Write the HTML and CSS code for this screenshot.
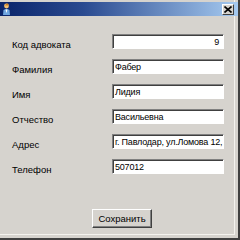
FILE: index.html
```html
<!DOCTYPE html>
<html lang="ru">
<head>
    <meta charset="UTF-8">
    <title>Адвокат</title>
    <link rel="stylesheet" href="styles.css">
</head>
<body>
    <div class="window">
        <div class="title-bar">
            <svg class="app-icon" width="9" height="12" viewBox="0 0 9 12">
                <circle cx="4.5" cy="3" r="2.4" fill="#f4c070"/>
                <path d="M4 1 L6 0.5 L6.5 2.5 L3 2.5 Z" fill="#d08020"/>
                <path d="M1 12 L1.5 7 Q4.5 5 7.5 7 L8 12 Z" fill="#6fa6e0"/>
                <path d="M3.5 6.5 L4.5 10 L5.5 6.5 Z" fill="#ffffff"/>
            </svg>
            <div class="close-btn">
                <svg width="8" height="7" viewBox="0 0 8 7">
                    <path d="M0.5 0.5 L7.5 6.5 M7.5 0.5 L0.5 6.5" stroke="#000" stroke-width="1.6"/>
                </svg>
            </div>
        </div>

        <div class="form">
            <label class="label">Код адвоката</label>
            <div class="field num">9</div>

            <label class="label">Фамилия</label>
            <div class="field">Фабер</div>

            <label class="label">Имя</label>
            <div class="field">Лидия</div>

            <label class="label">Отчество</label>
            <div class="field">Васильевна</div>

            <label class="label">Адрес</label>
            <div class="field">г. Павлодар, ул.Ломова 12,</div>

            <label class="label">Телефон</label>
            <div class="field">507012</div>
        </div>

        <div class="actions">
            <button class="btn">Сохранить</button>
        </div>
    </div>
</body>
</html>
```

FILE: styles.css
```css
body {
    margin: 0;
    padding: 0;
    background-color: #d6d3ce;
    font-family: "Liberation Sans", Arial, sans-serif;
    font-size: 9.5px;
    color: #000;
}

.window {
    width: 238px;
    height: 238px;
    border-right: 2px solid #404040;
    border-bottom: 2px solid #404040;
    box-shadow: inset -3px -3px 0 #d6d3ce, inset -4px -4px 0 #f4f2ee;
    overflow: hidden;
}

.title-bar {
    margin-top: 2px;
    height: 14px;
    background: linear-gradient(to right, #0a246a 0%, #2a4a90 35%, #a6caf0 100%);
    display: flex;
    align-items: center;
    justify-content: space-between;
    padding: 0 4px 0 2px;
}

.app-icon {
    display: block;
}

.close-btn {
    width: 10px;
    height: 9px;
    background-color: #d6d3ce;
    border-top: 1px solid #fff;
    border-left: 1px solid #fff;
    border-right: 1px solid #404040;
    border-bottom: 1px solid #404040;
    display: flex;
    align-items: center;
    justify-content: center;
}

.close-btn svg {
    display: block;
}

.form {
    margin-top: 18px;
    padding-left: 12px;
    display: grid;
    grid-template-columns: 100px 112px;
    grid-auto-rows: 15px;
    row-gap: 10px;
}

.label {
    padding-top: 4px;
    line-height: 13px;
    white-space: nowrap;
}

.field {
    box-sizing: border-box;
    height: 15px;
    background-color: #fff;
    border-top: 1px solid #808080;
    border-left: 1px solid #808080;
    border-right: 1px solid #ffffff;
    border-bottom: 1px solid #ffffff;
    box-shadow: inset 1px 1px 0 #404040;
    padding: 1px 1px 0 2px;
    font-size: 9px;
    letter-spacing: -0.2px;
    line-height: 12px;
    white-space: nowrap;
    overflow: hidden;
}

.field.num {
    text-align: right;
    padding-right: 4px;
}

.actions {
    margin-top: 35px;
    padding-left: 92px;
}

.btn {
    box-sizing: border-box;
    width: 60px;
    height: 19px;
    padding: 0;
    font-family: "Liberation Sans", Arial, sans-serif;
    font-size: 9.5px;
    color: #000;
    background-color: #d6d3ce;
    border-top: 1px solid #fff;
    border-left: 1px solid #fff;
    border-right: 1px solid #404040;
    border-bottom: 1px solid #404040;
    box-shadow: inset -1px -1px 0 #808080;
}
```
